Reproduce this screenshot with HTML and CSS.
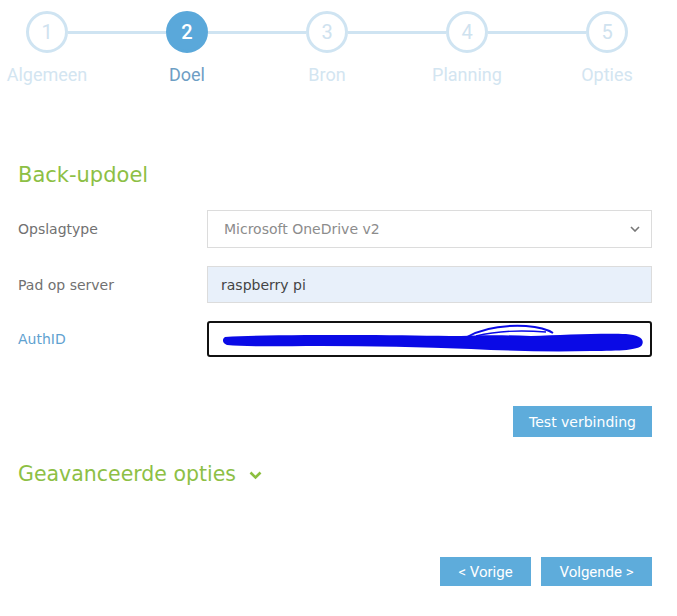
FILE: index.html
```html
<!DOCTYPE html>
<html lang="nl">
<head>
<meta charset="utf-8">
<title>Back-up wizard</title>
<link rel="stylesheet" href="styles.css">
</head>
<body>
<div class="wizard">
  <ol class="steps">
    <li class="step">
      <div class="track"><span class="seg seg-none"></span><span class="circle">1</span><span class="seg"></span></div>
      <span class="step-label">Algemeen</span>
    </li>
    <li class="step step-active">
      <div class="track"><span class="seg"></span><span class="circle">2</span><span class="seg"></span></div>
      <span class="step-label">Doel</span>
    </li>
    <li class="step">
      <div class="track"><span class="seg"></span><span class="circle">3</span><span class="seg"></span></div>
      <span class="step-label">Bron</span>
    </li>
    <li class="step">
      <div class="track"><span class="seg"></span><span class="circle">4</span><span class="seg"></span></div>
      <span class="step-label">Planning</span>
    </li>
    <li class="step">
      <div class="track"><span class="seg"></span><span class="circle">5</span><span class="seg seg-none"></span></div>
      <span class="step-label">Opties</span>
    </li>
  </ol>

  <section class="content">
    <h2 class="section-title">Back-updoel</h2>
    <div class="form">
      <label class="field-label">Opslagtype</label>
      <div class="control select-box">
        <span class="select-value">Microsoft OneDrive v2</span>
        <svg class="select-chevron" width="10" height="6" viewBox="0 0 10 6"><path d="M1 1l4 4 4-4" fill="none" stroke="#777" stroke-width="1.6"/></svg>
      </div>

      <label class="field-label">Pad op server</label>
      <div class="control text-box filled"><span>raspberry pi</span></div>

      <label class="field-label field-label-focus">AuthID</label>
      <div class="control text-box focused">
        <svg class="scribble" width="426" height="32" viewBox="0 0 426 32">
          <path d="M4 14 C40 12 90 12 140 12 C180 12 210 13 240 13 C260 12 285 12 310 13 C340 12 380 10 405 11 C418 12 424 16 421 22 C418 27 400 28 370 28 C330 29 290 28 250 26 C200 24 150 23 100 23 C60 23 25 24 6 22 C1 20 1 16 4 14 Z" fill="#0a0ae6"/>
          <path d="M246 14 C262 5 285 2 305 3 C318 4 326 6 332 10" fill="none" stroke="#0a0ae6" stroke-width="2"/>
          <path d="M255 13 C275 8 300 7 325 9" fill="none" stroke="#0a0ae6" stroke-width="1.4"/>
        </svg>
      </div>
    </div>

    <div class="row-right test-row">
      <button class="btn btn-test">Test verbinding</button>
    </div>

    <div class="advanced">
      <span>Geavanceerde opties</span>
      <svg class="advanced-chevron" width="13" height="9" viewBox="0 0 13 9"><path d="M1.5 1.5l5 5 5-5" fill="none" stroke="#8cbf3f" stroke-width="2.6"/></svg>
    </div>

    <div class="row-right nav-row">
      <button class="btn btn-prev">&lt; Vorige</button>
      <button class="btn btn-next">Volgende &gt;</button>
    </div>
  </section>
</div>
</body>
</html>
```

FILE: styles.css
```css
* { box-sizing: border-box; }

html, body {
  margin: 0;
  padding: 0;
  background: #ffffff;
}

body {
  font-family: "DejaVu Sans", Verdana, sans-serif;
  width: 677px;
  height: 616px;
  overflow: hidden;
}

.steps {
  list-style: none;
  margin: 0 0 0 -23px;
  padding: 11px 0 0 0;
  display: flex;
}

.step {
  width: 140px;
  display: flex;
  flex-direction: column;
  align-items: center;
}

.track {
  width: 100%;
  display: flex;
  align-items: center;
}

.seg {
  flex: 1;
  height: 3px;
  background: #cfe4f2;
}

.seg-none {
  background: transparent;
}

.circle {
  width: 42px;
  height: 42px;
  border: 3px solid #cfe4f2;
  border-radius: 50%;
  display: flex;
  align-items: center;
  justify-content: center;
  font-family: Roboto, "Liberation Sans", sans-serif;
  font-size: 20px;
  color: #cfe2ef;
  background: #ffffff;
}

.step-active .circle {
  background: #5aa8da;
  border-color: #5aa8da;
  color: #ffffff;
  font-weight: 500;
}

.step-label {
  margin-top: 12px;
  font-family: Roboto, "Liberation Sans", sans-serif;
  font-size: 18px;
  line-height: 20px;
  color: #d3e5f1;
}

.step-active .step-label {
  color: #6e9ec4;
}

.content {
  padding: 0 25px 0 18px;
}

.section-title {
  margin: 76px 0 0 0;
  font-weight: normal;
  font-size: 21px;
  line-height: 28px;
  color: #8dbf45;
}

.form {
  margin-top: 21px;
  display: grid;
  grid-template-columns: 189px 1fr;
  grid-template-rows: 38px 37px 36px;
  row-gap: 18px;
  align-items: center;
}

.field-label {
  font-size: 14px;
  color: #717171;
}

.field-label-focus {
  color: #5fa2d0;
}

.control {
  height: 100%;
  display: flex;
  align-items: center;
  border: 1px solid #dcdcdc;
  font-size: 14px;
}

.select-box {
  padding: 0 11px 0 16px;
  justify-content: space-between;
  color: #8c8c8c;
  background: #ffffff;
}

.text-box {
  padding: 0 13px;
}

.filled {
  background: #e8f0fa;
  color: #444444;
}

.focused {
  border: 2px solid #111111;
  border-radius: 3px;
  padding: 0 0 0 12px;
  background: #ffffff;
}

.scribble {
  display: block;
}

.row-right {
  display: flex;
  justify-content: flex-end;
  gap: 10px;
}

.test-row {
  margin-top: 49px;
}

.btn {
  border: none;
  background: #5eacdb;
  color: #ffffff;
  font-family: "DejaVu Sans", Verdana, sans-serif;
  font-size: 14px;
  margin: 0;
  cursor: pointer;
}

.btn-test {
  width: 139px;
  height: 31px;
}

.advanced {
  margin-top: 24px;
  display: flex;
  align-items: center;
  gap: 13px;
  font-size: 20.5px;
  line-height: 26px;
  color: #8dbf45;
}

.advanced-chevron {
  margin-top: 2px;
}

.nav-row {
  margin-top: 70px;
}

.btn-prev {
  width: 91px;
  height: 29px;
  font-family: Roboto, "Liberation Sans", sans-serif;
  font-size: 15px;
}

.btn-next {
  width: 111px;
  height: 29px;
  font-family: Roboto, "Liberation Sans", sans-serif;
  font-size: 15px;
}
```
